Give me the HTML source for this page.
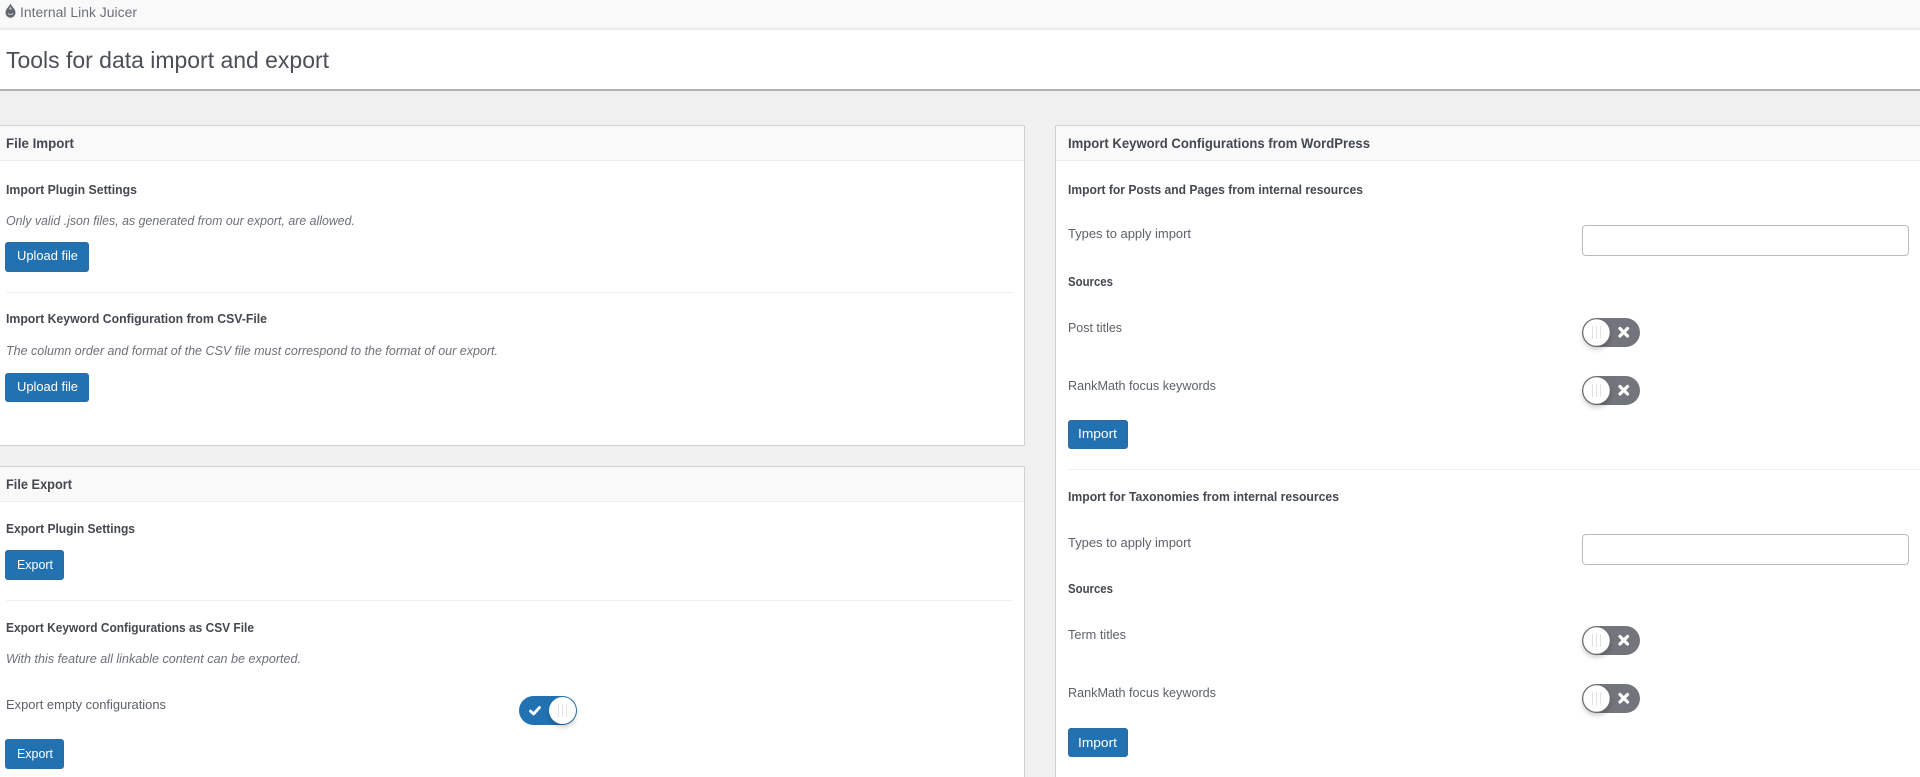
<!DOCTYPE html>
<html lang="en"><head><meta charset="utf-8"><title>Tools for data import and export</title>
<style>
html,body{margin:0;padding:0;width:1920px;height:777px;overflow:hidden;background:#f0f0f1}
#page{position:relative;width:1920px;height:777px;overflow:hidden;background:#f0f0f1;filter:blur(.3px)}
.b{position:absolute;box-sizing:border-box}
svg{position:absolute;left:0;top:0;display:block}
text{font-family:"Liberation Sans",sans-serif}
.h{font-size:13.5px;font-weight:700;fill:#43494f}
.s{font-size:12.5px;font-weight:700;fill:#43494f}
.i{font-size:12.5px;font-style:italic;fill:#6c7177}
.l{font-size:12.5px;fill:#5c6268}
.w{font-size:12.5px;fill:#fff}
.btn{background:#2271b1;border:1px solid #2a6ba3;border-radius:3px}
.inp{background:#fff;border:1px solid #b9bbbe;border-radius:4px}
.card{background:#fff;border:1px solid #cfd0d2}
.ch{background:#f9f9f9;border-bottom:1px solid #eeeeee}
.dv{background:#f0f0f0;height:1px}
</style></head><body>
<div id="page">
<!-- top bars -->
<div class="b" style="left:0;top:0;width:1920px;height:30px;background:#f9f9f9;border-bottom:2px solid #ececec"></div>
<div class="b" style="left:0;top:30px;width:1920px;height:61px;background:#fff;border-bottom:2px solid #b0b1b3"></div>
<!-- left cards -->
<div class="b card" style="left:-1px;top:125px;width:1026px;height:321px"></div>
<div class="b ch" style="left:0;top:126px;width:1024px;height:35px"></div>
<div class="b dv" style="left:6px;top:292px;width:1006px"></div>
<div class="b card" style="left:-1px;top:466px;width:1026px;height:330px"></div>
<div class="b ch" style="left:0;top:467px;width:1024px;height:35px"></div>
<div class="b dv" style="left:6px;top:600px;width:1006px"></div>
<!-- right card -->
<div class="b card" style="left:1055px;top:125px;width:880px;height:670px"></div>
<div class="b ch" style="left:1056px;top:126px;width:864px;height:35px"></div>
<div class="b dv" style="left:1068px;top:469px;width:852px"></div>
<!-- buttons -->
<div class="b btn" style="left:5px;top:242px;width:84px;height:30px"></div>
<div class="b btn" style="left:5px;top:373px;width:84px;height:29px"></div>
<div class="b btn" style="left:5px;top:550px;width:59px;height:30px"></div>
<div class="b btn" style="left:5px;top:739px;width:59px;height:30px"></div>
<div class="b btn" style="left:1068px;top:420px;width:60px;height:29px"></div>
<div class="b btn" style="left:1068px;top:728px;width:60px;height:29px"></div>
<!-- inputs -->
<div class="b inp" style="left:1582px;top:225px;width:327px;height:31px"></div>
<div class="b inp" style="left:1582px;top:534px;width:327px;height:31px"></div>
<svg width="1920" height="777" viewBox="0 0 1920 777" xmlns="http://www.w3.org/2000/svg">
<defs>
<filter id="sh" x="-40%" y="-40%" width="180%" height="190%"><feDropShadow dx="0" dy="3" stdDeviation="2.5" flood-color="#000" flood-opacity=".2"/></filter>
<g id="off">
<rect x="0" y="0" width="58" height="29" rx="14.5" fill="#72757b"/>
<circle cx="14.5" cy="14.5" r="13.6" fill="#fff" stroke="#6a6d73" stroke-width=".8" filter="url(#sh)"/>
<path d="M10.5 8v13M14.5 8v13M18.5 8v13" stroke="#e2e2e2" stroke-width="1" fill="none"/>
<path d="M38 10.5l7.5 7.5M45.5 10.5l-7.5 7.5" stroke="#fff" stroke-width="3.2" stroke-linecap="round" fill="none"/>
</g>
<g id="on">
<rect x="0" y="0" width="58" height="29" rx="14.5" fill="#2271b1"/>
<circle cx="43.5" cy="14.5" r="13.5" fill="#fff" filter="url(#sh)"/>
<path d="M39.5 8v13M43.5 8v13M47.5 8v13" stroke="#e2e2e2" stroke-width="1" fill="none"/>
<path d="M11.5 15l3 3 6-6.5" stroke="#fff" stroke-width="2.8" stroke-linecap="round" stroke-linejoin="round" fill="none"/>
</g>
</defs>
<!-- logo -->
<path d="M10.5 3.5c.6 2.400 5 5.400 5 9.200a5 5 0 0 1-10 0c0-3.800 4.400-6.800 5-9.200z" fill="#60666d"/>
<path d="M10.5 6.500l1.500 3h-3z" fill="#c8cbce"/>
<path d="M8 13.500c1 1.300 4 1.300 5 0" stroke="#d5d7d9" stroke-width="1" fill="none"/>
<text x="20" y="17" font-size="13.5" fill="#6c7177" textLength="117" lengthAdjust="spacingAndGlyphs">Internal Link Juicer</text>
<text x="6" y="68" font-size="23.5" fill="#4a5056" textLength="323" lengthAdjust="spacingAndGlyphs">Tools for data import and export</text>

<text class="h" x="6" y="148" textLength="68" lengthAdjust="spacingAndGlyphs">File Import</text>
<text class="s" x="6" y="194" textLength="131" lengthAdjust="spacingAndGlyphs">Import Plugin Settings</text>
<text class="i" x="6" y="225" textLength="349" lengthAdjust="spacingAndGlyphs">Only valid .json files, as generated from our export, are allowed.</text>
<text class="w" x="17" y="260" textLength="61" lengthAdjust="spacingAndGlyphs">Upload file</text>
<text class="s" x="6" y="323" textLength="261" lengthAdjust="spacingAndGlyphs">Import Keyword Configuration from CSV-File</text>
<text class="i" x="6" y="355" textLength="492" lengthAdjust="spacingAndGlyphs">The column order and format of the CSV file must correspond to the format of our export.</text>
<text class="w" x="17" y="391" textLength="61" lengthAdjust="spacingAndGlyphs">Upload file</text>

<text class="h" x="6" y="489" textLength="66" lengthAdjust="spacingAndGlyphs">File Export</text>
<text class="s" x="6" y="533" textLength="129" lengthAdjust="spacingAndGlyphs">Export Plugin Settings</text>
<text class="w" x="17" y="569" textLength="36" lengthAdjust="spacingAndGlyphs">Export</text>
<text class="s" x="6" y="632" textLength="248" lengthAdjust="spacingAndGlyphs">Export Keyword Configurations as CSV File</text>
<text class="i" x="6" y="663" textLength="295" lengthAdjust="spacingAndGlyphs">With this feature all linkable content can be exported.</text>
<text class="l" x="6" y="709" textLength="160" lengthAdjust="spacingAndGlyphs">Export empty configurations</text>
<use href="#on" x="519" y="696"/>
<text class="w" x="17" y="758" textLength="36" lengthAdjust="spacingAndGlyphs">Export</text>

<text class="h" x="1068" y="148" textLength="302" lengthAdjust="spacingAndGlyphs">Import Keyword Configurations from WordPress</text>
<text class="s" x="1068" y="194" textLength="295" lengthAdjust="spacingAndGlyphs">Import for Posts and Pages from internal resources</text>
<text class="l" x="1068" y="238" textLength="123" lengthAdjust="spacingAndGlyphs">Types to apply import</text>
<text class="s" x="1068" y="286" textLength="45" lengthAdjust="spacingAndGlyphs">Sources</text>
<text class="l" x="1068" y="332" textLength="54" lengthAdjust="spacingAndGlyphs">Post titles</text>
<use href="#off" x="1582" y="318"/>
<text class="l" x="1068" y="390" textLength="148" lengthAdjust="spacingAndGlyphs">RankMath focus keywords</text>
<use href="#off" x="1582" y="376"/>
<text class="w" x="1078" y="438" textLength="39" lengthAdjust="spacingAndGlyphs">Import</text>

<text class="s" x="1068" y="501" textLength="271" lengthAdjust="spacingAndGlyphs">Import for Taxonomies from internal resources</text>
<text class="l" x="1068" y="547" textLength="123" lengthAdjust="spacingAndGlyphs">Types to apply import</text>
<text class="s" x="1068" y="593" textLength="45" lengthAdjust="spacingAndGlyphs">Sources</text>
<text class="l" x="1068" y="639" textLength="58" lengthAdjust="spacingAndGlyphs">Term titles</text>
<use href="#off" x="1582" y="626"/>
<text class="l" x="1068" y="697" textLength="148" lengthAdjust="spacingAndGlyphs">RankMath focus keywords</text>
<use href="#off" x="1582" y="684"/>
<text class="w" x="1078" y="747" textLength="39" lengthAdjust="spacingAndGlyphs">Import</text>
</svg>
</div>
</body></html>
